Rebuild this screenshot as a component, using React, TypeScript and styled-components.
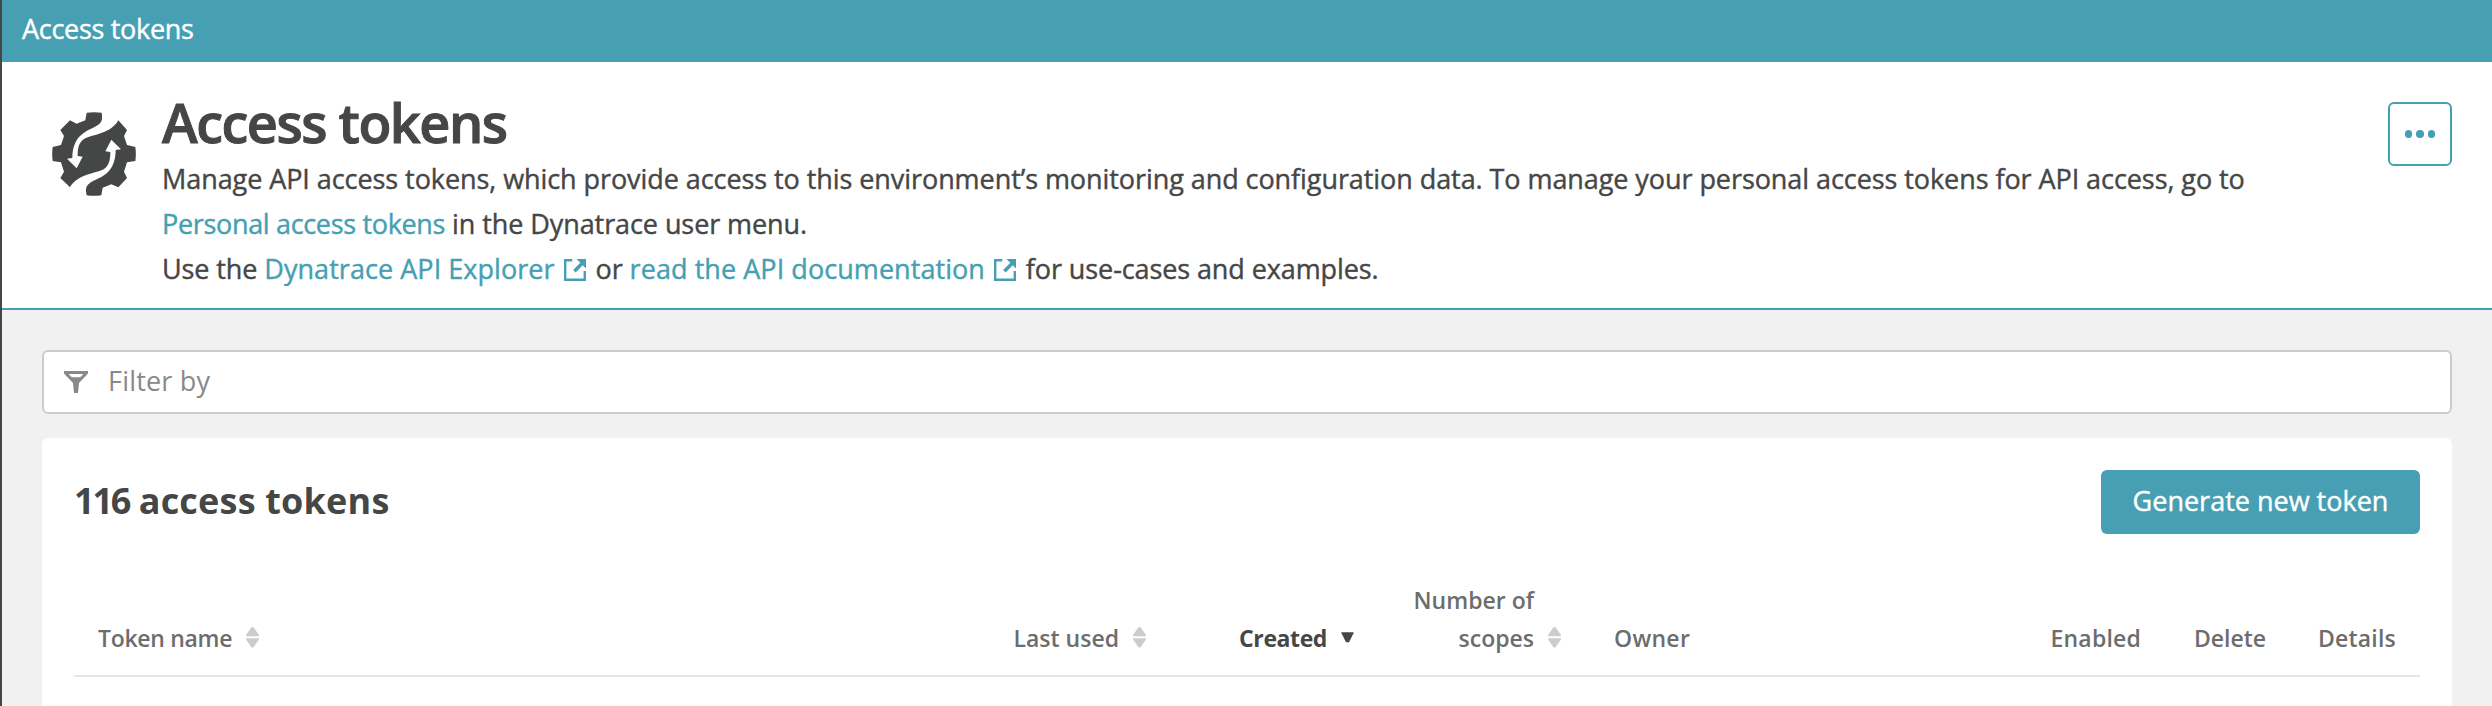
import React from 'react';
import styled, { createGlobalStyle } from 'styled-components';

const teal = '#469fb2';
const ink = '#454646';

const GlobalStyle = createGlobalStyle`
  *, *::before, *::after { box-sizing: border-box; }
  body {
    margin: 0;
    background: #f1f1f1;
    color: ${ink};
    font-family: "Open Sans", "Noto Sans", sans-serif;
    font-size: 27px;
  }
`;

const Page = styled.div`
  height: 706px;
  display: flex;
  flex-direction: column;
  overflow: hidden;
  border-left: 2px solid ${ink};
`;

const Breadcrumb = styled.header`
  flex: none;
  height: 62px;
  padding: 0 20px;
  background: ${teal};
  color: #fff;
  line-height: 58px;
  letter-spacing: -0.3px;
  -webkit-text-stroke: 0.4px currentColor;
`;

const Intro = styled.section`
  flex: none;
  height: 248px;
  display: flex;
  align-items: flex-start;
  padding: 40px 40px 0 50px;
  background: #fff;
  border-bottom: 2px solid ${teal};
`;

const GearIcon = styled.svg`
  flex: none;
  width: 84px;
  height: 84px;
  margin: 10px 26px 0 0;
`;

const IntroText = styled.div`
  flex: 1;
`;

const Title = styled.h1`
  margin: -7px 0 0;
  height: 61px;
  line-height: 54px;
  font-size: 54px;
  font-weight: 600;
  letter-spacing: -1.5px;
  -webkit-text-stroke: 1px currentColor;
`;

const Line = styled.p<{ $spacing: number }>`
  margin: 0;
  height: 45px;
  line-height: 45px;
  white-space: nowrap;
  letter-spacing: ${(p) => p.$spacing}px;
  -webkit-text-stroke: 0.4px currentColor;
`;

const Link = styled.a<{ $spacing?: number }>`
  color: ${teal};
  letter-spacing: ${(p) => (p.$spacing === undefined ? 'inherit' : `${p.$spacing}px`)};
`;

const ExternalSvg = styled.svg`
  width: 22px;
  height: 22px;
  margin: 0 3px 0 9px;
  vertical-align: -2px;
`;

const MenuButton = styled.button`
  flex: none;
  width: 64px;
  height: 64px;
  padding: 0;
  display: flex;
  align-items: center;
  justify-content: center;
  gap: 4px;
  background: #fff;
  border: 2px solid ${teal};
  border-radius: 6px;
`;

const Dot = styled.span`
  width: 7.6px;
  height: 7.6px;
  border-radius: 50%;
  background: ${teal};
`;

const Content = styled.main`
  flex: 1;
  min-height: 0;
  display: flex;
  flex-direction: column;
  gap: 24px;
  padding: 40px 40px 0;
`;

const FilterField = styled.div`
  flex: none;
  height: 64px;
  display: flex;
  align-items: center;
  gap: 20px;
  padding: 0 20px;
  background: #fff;
  border: 2px solid #ccc;
  border-radius: 6px;
  color: #898989;
  letter-spacing: 0.2px;
  line-height: 58px;
`;

const FilterLabel = styled.span`
  height: 60px;
`;

const Card = styled.section`
  flex: 1;
  padding: 32px 32px 0;
  background: #fff;
  border-radius: 6px 6px 0 0;
`;

const CardHead = styled.div`
  display: flex;
  align-items: center;
  justify-content: space-between;
  height: 64px;
`;

const CardTitle = styled.h2`
  margin: 0;
  height: 62px;
  font-size: 36px;
  font-weight: 700;
  line-height: 60px;
  letter-spacing: 0.2px;
`;

const Count = styled.span`
  letter-spacing: -2.2px;
`;

const PrimaryButton = styled.button`
  width: 319px;
  height: 64px;
  padding: 0 0 3px;
  background: ${teal};
  border: 0;
  border-radius: 6px;
  color: #fff;
  font: 400 27px "Open Sans", sans-serif;
  -webkit-text-stroke: 0.4px currentColor;
`;

const HeadRow = styled.div`
  display: grid;
  grid-template-columns: 885px 211px 208px 212px 1fr 138px 125px 130px;
  align-items: end;
  height: 143px;
  padding-bottom: 18px;
  border-bottom: 2px solid #e6e6e6;
`;

const HeadCell = styled.div<{ $right?: boolean; $active?: boolean; $spacing?: number }>`
  display: flex;
  align-items: flex-end;
  justify-content: ${(p) => (p.$right ? 'flex-end' : 'flex-start')};
  gap: 14px;
  padding: 0 24px;
  font-size: 23px;
  line-height: 38px;
  font-weight: ${(p) => (p.$active ? 700 : 600)};
  letter-spacing: ${(p) => p.$spacing ?? 0}px;
  text-align: ${(p) => (p.$right ? 'right' : 'left')};
  white-space: nowrap;
  color: ${(p) => (p.$active ? ink : '#6d6d6d')};
`;

const ScopesCell = styled(HeadCell)`
  margin-right: 5px;
`;

const SortSvg = styled.svg`
  flex: none;
  width: 13px;
  height: 21px;
  margin-bottom: 9px;
`;

const SortIcon = ({ active = false }: { active?: boolean }) => (
  <SortSvg viewBox="0 0 13 21" fill={active ? ink : '#ccc'}>
    {active ? (
      <path d="M.5 5.3h12v1L8 15.3H5L.5 6.3z" />
    ) : (
      <path d="M5.7 0h1.6L13 8v1.2H0V8zM0 11.3h13v1.2L7.3 20.5H5.7L0 12.5z" />
    )}
  </SortSvg>
);

const ExternalIcon = () => (
  <ExternalSvg viewBox="0 0 22 22">
    <path d="M8.3 1.2H1.2v19.6h19.6V12" fill="none" stroke={teal} strokeWidth="2.4" />
    <path d="M12.5 0H22v9.5l-3.2-3.2-7.2 7.2-2.5-2.5 7.2-7.2z" fill={teal} />
  </ExternalSvg>
);

const arrowPath =
  'M216 60V88C212 109 182 114 162 128 138 144 127 170 127 204L111 206 140 235 158 200 143 198C143 172 148 156 162 147 190 132 242 132 265 91V60Z';

const App = () => (
  <>
    <GlobalStyle />
    <Page>
      <Breadcrumb>Access tokens</Breadcrumb>
      <Intro>
        <GearIcon viewBox="66 66 252 252">
          <path
            fill={ink}
            d="M170 68Q192 65 215 68L218 91 244 101 265 91 291 120 282 138 291 165 316 171Q319 192 316 213L291 217 282 245 291 264 265 292 244 283 218 293 214 316Q192 319 170 316L166 293 140 283 120 292 91 264 102 245 93 217 68 213Q65 192 68 171L93 165 102 138 91 120 120 91 140 101 166 91Z"
          />
          <path fill="#fff" d={arrowPath} />
          <path fill="#fff" transform="rotate(180 192 192)" d={arrowPath} />
        </GearIcon>
        <IntroText>
          <Title>Access tokens</Title>
          <Line $spacing={-0.07}>
            Manage API access tokens, which provide access to this environment’s monitoring and
            configuration data. To manage your personal access tokens for API access, go to
          </Line>
          <Line $spacing={-0.08}>
            <Link $spacing={-0.33}>Personal access tokens</Link> in the Dynatrace user menu.
          </Line>
          <Line $spacing={-0.1}>
            Use the <Link $spacing={0.05}>Dynatrace API Explorer<ExternalIcon /></Link> or{' '}
            <Link $spacing={0.06}>read the API documentation<ExternalIcon /></Link> for use-cases and
            examples.
          </Line>
        </IntroText>
        <MenuButton aria-label="More actions">
          <Dot />
          <Dot />
          <Dot />
        </MenuButton>
      </Intro>
      <Content>
        <FilterField>
          <svg width="24" height="22" viewBox="0 0 24 22" fill="#898989">
            <path fillRule="evenodd" d="M0 0h24v2.5L15 12l-1 10h-4L9 12 0 2.5zM4.7 3l3 3.2h8.6L19.3 3z" />
          </svg>
          <FilterLabel>Filter by</FilterLabel>
        </FilterField>
        <Card>
          <CardHead>
            <CardTitle><Count>116</Count> access tokens</CardTitle>
            <PrimaryButton>Generate new token</PrimaryButton>
          </CardHead>
          <HeadRow>
            <HeadCell $spacing={-0.3}>Token name<SortIcon /></HeadCell>
            <HeadCell $right>Last used<SortIcon /></HeadCell>
            <HeadCell $right $active $spacing={-0.4}>Created<SortIcon active /></HeadCell>
            <ScopesCell $right><span>Number of<br />scopes</span><SortIcon /></ScopesCell>
            <HeadCell $spacing={0.3}>Owner</HeadCell>
            <HeadCell $right $spacing={0.2}>Enabled</HeadCell>
            <HeadCell $right>Delete</HeadCell>
            <HeadCell $right $spacing={0.2}>Details</HeadCell>
          </HeadRow>
        </Card>
      </Content>
    </Page>
  </>
);

export default App;
